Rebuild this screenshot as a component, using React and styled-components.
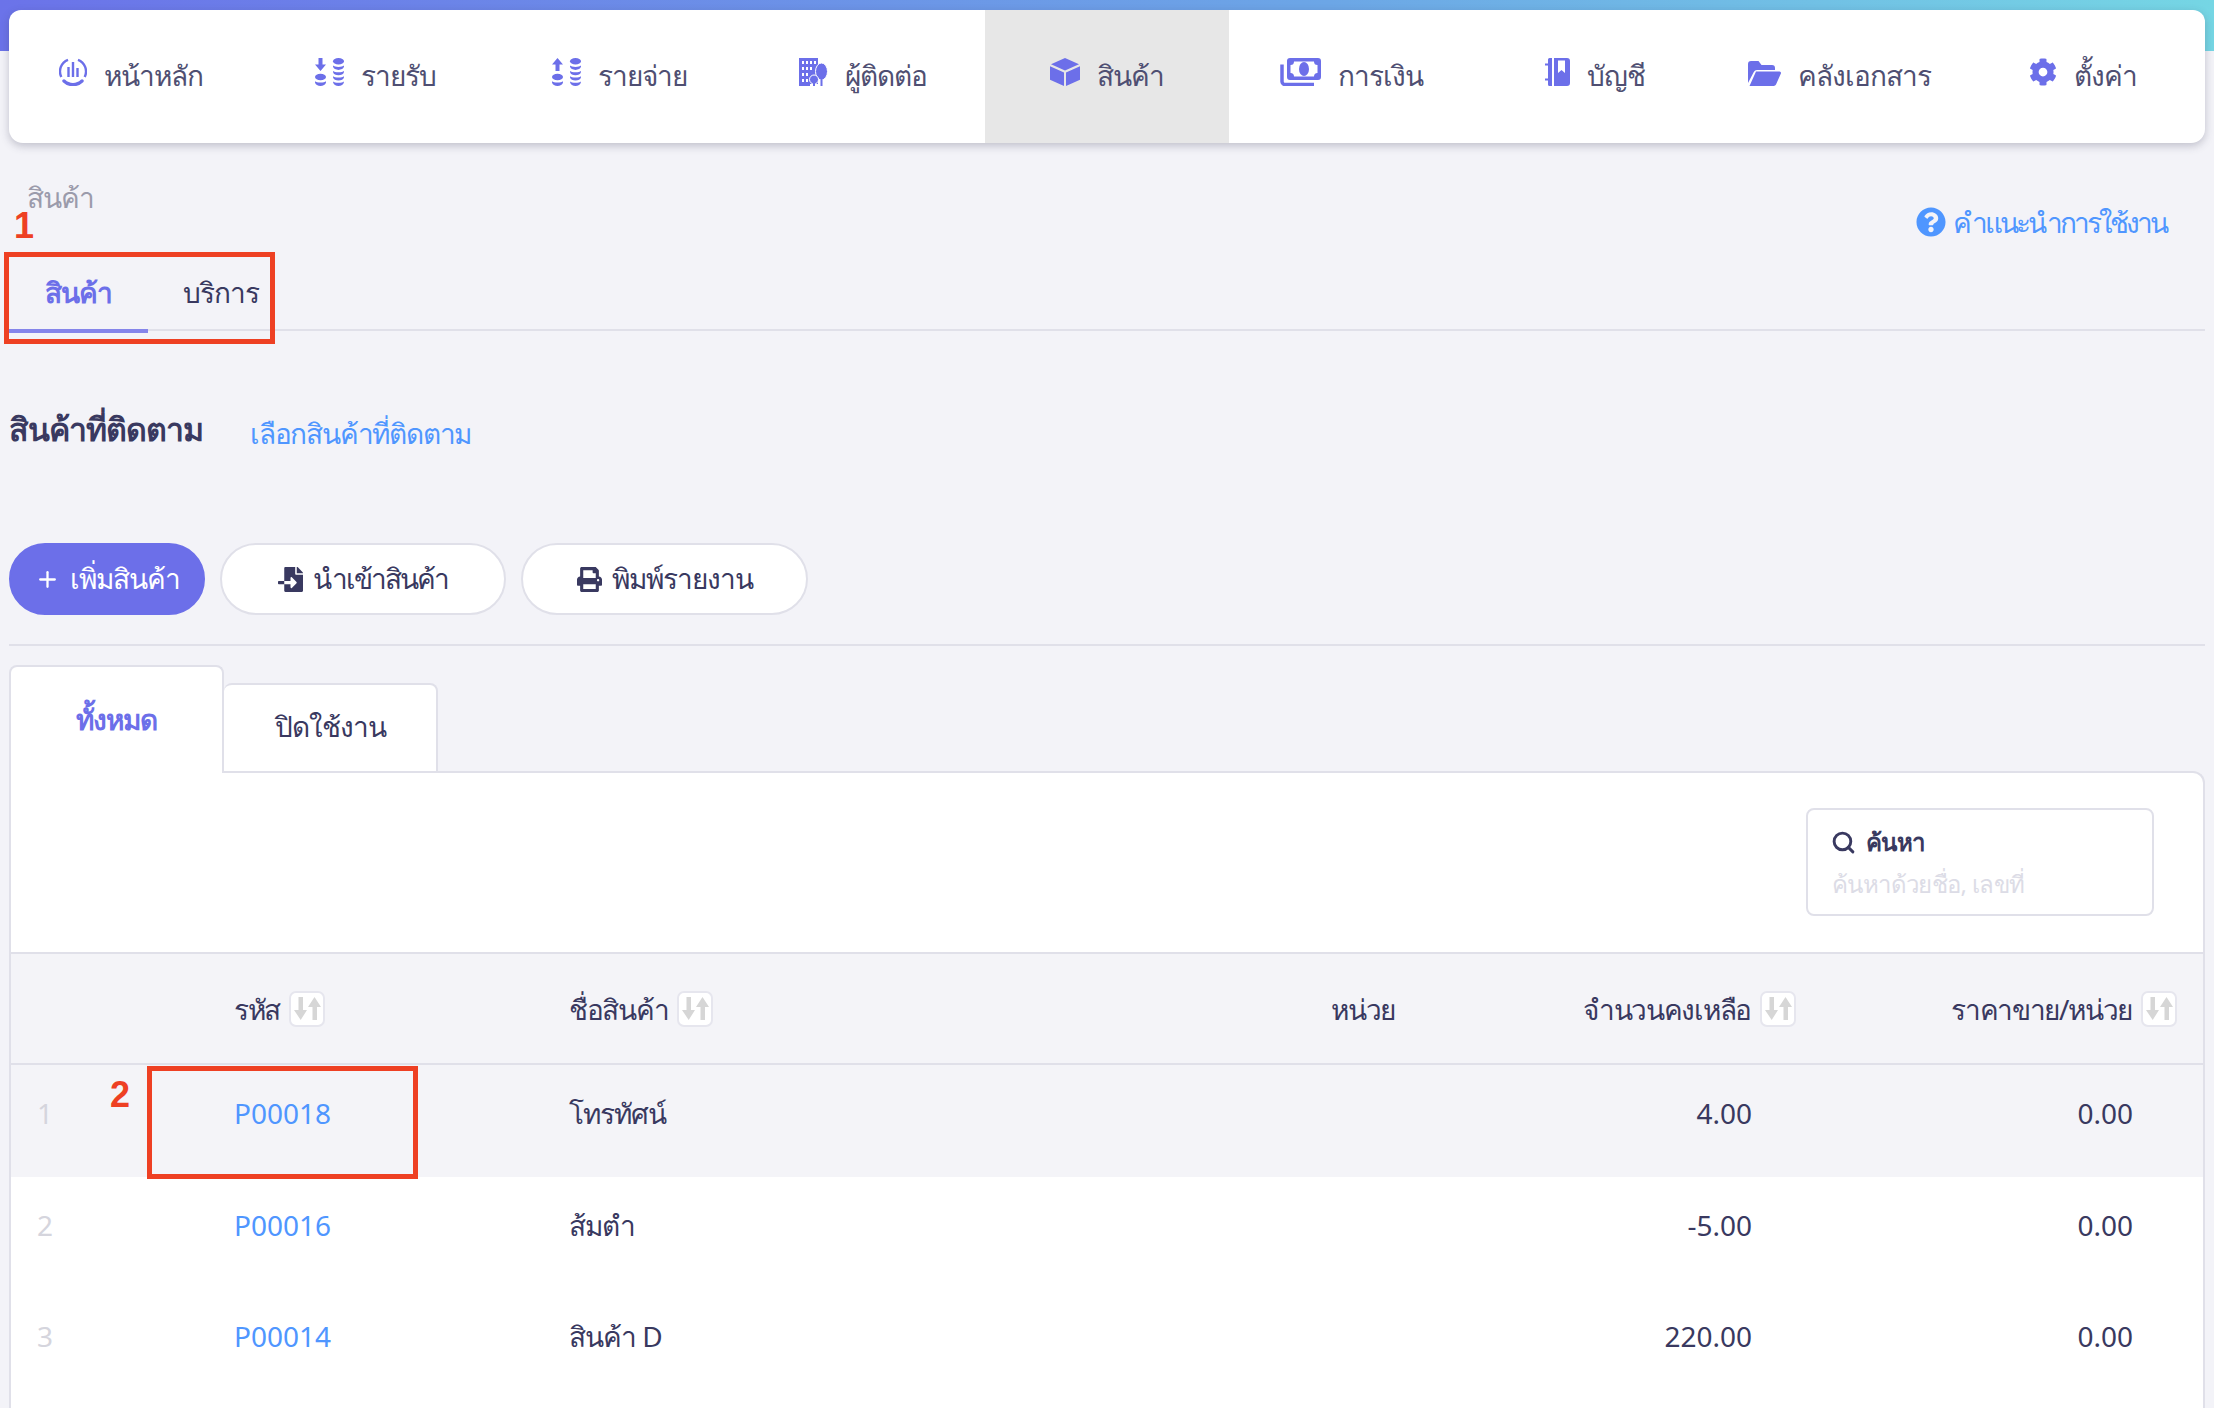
import React from "react";
import styled, { createGlobalStyle } from "styled-components";
import { FaCog, FaPrint, FaFileImport, FaQuestionCircle } from "react-icons/fa";
import { Search, Plus } from "lucide-react";

const ACCENT = "#6c6fe9";
const BLUE = "#4f96ff";
const INK = "#393960";
const LINE = "#e0e0e9";
const RED = "#ee4023";

const GlobalStyle = createGlobalStyle`
  html, body {
    margin: 0;
    padding: 0;
    background: #f3f3f8;
    font-family: "Noto Sans", "Open Sans", sans-serif;
    color: ${INK};
  }
  * { box-sizing: border-box; }
`;

const Page = styled.div`
  position: relative;
  width: 2214px;
  height: 1408px;
  overflow: hidden;
  background: #f3f3f8;
  letter-spacing: -1px;
`;

const Band = styled.div`
  height: 51px;
  background: linear-gradient(90deg, #6b73e9 0%, #6ca6e6 60%, #75d6e4 100%);
`;

const Nav = styled.nav`
  display: grid;
  grid-template-columns: repeat(9, 1fr);
  height: 133px;
  margin: -41px 9px 0;
  background: #fff;
  border-radius: 12px 12px 14px 14px;
  box-shadow: 0 3px 8px rgba(60, 60, 90, 0.28);
  overflow: hidden;
`;

const NavItem = styled.a`
  display: flex;
  align-items: flex-start;
  justify-content: center;
  gap: 17px;
  padding-top: 48px;
  font-size: 28px;
  line-height: 34px;
  color: #4f4f72;
  background: ${({ $active }) => ($active ? "#e7e7e7" : "transparent")};
  svg {
    flex: none;
    color: ${ACCENT};
    width: auto;
    height: 28px;
  }
`;

const Content = styled.div`
  padding: 0 9px;
`;

const Crumbs = styled.div`
  display: flex;
  justify-content: space-between;
  align-items: flex-start;
  height: 116px;
  padding: 40px 0 0 18px;
  font-size: 28px;
  line-height: 28px;
  color: #9b9bab;
`;

const Help = styled.a`
  display: flex;
  align-items: center;
  gap: 7px;
  margin: 24px 39px 0 0;
  color: ${BLUE};
  letter-spacing: -3px;
  svg { width: 30px; height: 30px; }
`;

const TopTabsRow = styled.div`
  display: flex;
  align-items: flex-start;
  height: 72px;
  padding-top: 15px;
  border-bottom: 2px solid ${LINE};
`;

const TopTab = styled.a`
  width: ${({ $w }) => $w}px;
  height: 59px;
  font-size: 28px;
  line-height: 36px;
  text-align: center;
  color: ${({ $active }) => ($active ? ACCENT : INK)};
  font-weight: ${({ $active }) => ($active ? 600 : 400)};
  border-bottom: ${({ $active }) => ($active ? "4px solid #8585ea" : "none")};
`;

const Follow = styled.div`
  display: flex;
  align-items: baseline;
  gap: 47px;
  height: 212px;
  padding-top: 78px;
`;

const FollowTitle = styled.h2`
  margin: 0;
  font-size: 32px;
  line-height: 40px;
  font-weight: 700;
  color: ${INK};
`;

const FollowLink = styled.a`
  position: relative;
  top: 3px;
  font-size: 28px;
  letter-spacing: -1.2px;
  color: ${BLUE};
`;

const Actions = styled.div`
  display: flex;
  gap: 15px;
  height: 103px;
  border-bottom: 2px solid ${LINE};
`;

const PillButton = styled.button`
  display: flex;
  align-items: center;
  justify-content: center;
  gap: 10px;
  width: ${({ $w }) => $w}px;
  height: 72px;
  padding: 0;
  font: inherit;
  font-size: 28px;
  letter-spacing: ${({ $tight }) => ($tight ? "-2px" : "-1px")};
  border-radius: 36px;
  border: 2px solid ${({ $primary }) => ($primary ? ACCENT : LINE)};
  background: ${({ $primary }) => ($primary ? ACCENT : "#fff")};
  color: ${({ $primary }) => ($primary ? "#fff" : INK)};
  svg { width: 25px; height: 25px; }
`;

const ListTabs = styled.div`
  display: flex;
  align-items: flex-end;
  height: 127px;
  margin-bottom: -2px;
  position: relative;
  z-index: 1;
`;

const ListTab = styled.a`
  display: block;
  width: ${({ $active }) => ($active ? 215 : 214)}px;
  height: ${({ $active }) => ($active ? 108 : 90)}px;
  padding-top: ${({ $active }) => ($active ? 34 : 23)}px;
  font-size: 28px;
  line-height: 36px;
  text-align: center;
  background: #fff;
  color: ${({ $active }) => ($active ? ACCENT : INK)};
  font-weight: ${({ $active }) => ($active ? 600 : 400)};
  border: 2px solid ${LINE};
  border-bottom: ${({ $active }) => ($active ? "none" : `2px solid ${LINE}`)};
  border-left-width: ${({ $active }) => ($active ? 2 : 0)}px;
  border-radius: 8px 8px 0 0;
`;

const Panel = styled.section`
  background: #fff;
  border: 2px solid ${LINE};
  border-bottom: none;
  border-radius: 0 12px 0 0;
  height: 640px;
`;

const SearchRow = styled.div`
  display: flex;
  justify-content: flex-end;
  height: 179px;
  padding: 35px 49px 0 0;
`;

const SearchBox = styled.div`
  width: 348px;
  height: 108px;
  padding: 15px 24px;
  border: 2px solid ${LINE};
  border-radius: 8px;
  letter-spacing: -0.6px;
`;

const SearchLabel = styled.div`
  display: flex;
  align-items: center;
  gap: 10px;
  margin-left: -1px;
  font-size: 24px;
  line-height: 34px;
  font-weight: 600;
  svg { width: 25px; height: 25px; flex: none; }
`;

const Placeholder = styled.div`
  margin-top: 9px;
  font-size: 24px;
  line-height: 32px;
  color: #dcdce6;
`;

const Row = styled.div`
  display: grid;
  grid-template-columns: 223px 335px 600px 226px 401px 381px;
  height: ${({ $head }) => ($head ? 113 : 111.5)}px;
  padding-top: ${({ $head }) => ($head ? 0 : 30)}px;
  align-items: ${({ $head }) => ($head ? "center" : "start")};
  font-size: 28px;
  line-height: 36px;
  background: ${({ $shade }) => ($shade ? "#f4f4f8" : "#fff")};
  border-top: ${({ $head }) => ($head ? `2px solid ${LINE}` : "none")};
  border-bottom: ${({ $head }) => ($head ? `2px solid ${LINE}` : "none")};
`;

const HeadCell = styled.div`
  display: flex;
  align-items: center;
  gap: 9px;
  letter-spacing: -1.3px;
  justify-content: ${({ $right }) => ($right ? "flex-end" : "flex-start")};
`;

const SortBox = styled.span`
  display: flex;
  align-items: center;
  justify-content: center;
  flex: none;
  width: 36px;
  height: 36px;
  background: #fff;
  border: 2px solid #e6e6ee;
  border-radius: 7px;
`;

const IndexCell = styled.div`
  padding-left: 26px;
  color: #d5d5dd;
  letter-spacing: 0;
`;

const CodeLink = styled.a`
  color: ${BLUE};
  letter-spacing: 0;
`;

const NumCell = styled.div`
  text-align: right;
  padding-right: 44px;
  letter-spacing: 0;
`;

const Note = styled.span`
  position: absolute;
  left: ${({ $x }) => $x}px;
  top: ${({ $y }) => $y}px;
  font-family: "Liberation Sans", sans-serif;
  font-weight: 700;
  font-size: 36px;
  line-height: 28px;
  letter-spacing: 0;
  color: ${RED};
`;

const NoteBox = styled.div`
  position: absolute;
  left: ${({ $x }) => $x}px;
  top: ${({ $y }) => $y}px;
  width: ${({ $w }) => $w}px;
  height: ${({ $h }) => $h}px;
  border: 5px solid ${RED};
`;

const HomeIcon = () => (
  <svg viewBox="0 0 28 28" fill="none" stroke="currentColor">
    <path d="M9 1.800A12.500 12.500 0 0 0 2.300 19" strokeWidth="2.400" />
    <path d="M19 1.800A12.500 12.500 0 0 1 25.700 19" strokeWidth="2.400" />
    <path d="M5 23a13 13 0 0 0 18 0" strokeWidth="3.400" strokeLinecap="round" />
    <path d="M9.500 9v10M14 4v15M18.500 10v9" strokeWidth="2.400" />
  </svg>
);

const CoinsIcon = ({ up }) => (
  <svg viewBox="0 0 29 28" fill="currentColor">
    {up ? (
      <path d="M5.500 0l5.500 6.500H7.500V13h-4V6.500H0z" />
    ) : (
      <path d="M3.500 0h4v6.500H11L5.500 13 0 6.500h3.500z" />
    )}
    <ellipse cx="5.500" cy="19" rx="5.500" ry="3.200" />
    <path d="M0 23.200c1.500 1.800 9.500 1.800 11 0v1.300c-.8 4.600-10.200 4.600-11 0z" />
    <ellipse cx="23.500" cy="3.200" rx="5.500" ry="3.200" />
    <path d="M18 7.600c1.500 1.800 9.500 1.800 11 0v1c-.8 4.400-10.200 4.400-11 0zM18 13c1.500 1.800 9.500 1.800 11 0v1c-.8 4.400-10.200 4.400-11 0zM18 18.200c1.500 1.800 9.500 1.800 11 0v1c-.8 4.400-10.200 4.400-11 0zM18 23.400c1.500 1.800 9.500 1.800 11 0v.6c-.8 5.300-10.200 5.300-11 0z" />
  </svg>
);

const ContactIcon = () => (
  <svg viewBox="0 0 29 28" fill="currentColor">
    <path
      fillRule="evenodd"
      d="M0 0h19v28H0zM3 3v3h2V3zM7 3v3h2V3zM11 3v3h2V3zM15 3v3h2V3zM3 9v3h2V9zM7 9v3h2V9zM11 9v3h2V9zM3 15v3h2v-3zM7 15v3h2v-3zM3 21v3h2v-3zM7 21v3h2v-3z"
    />
    <path d="M11 26h13v2H11z" fill="#fff" />
    <ellipse cx="22.500" cy="13.500" rx="6" ry="8.500" stroke="#fff" strokeWidth="1" />
    <rect x="21.500" y="20" width="2" height="8" />
    <circle cx="15" cy="21.500" r="4.500" stroke="#fff" strokeWidth="1" />
    <rect x="14" y="25" width="2" height="3" />
  </svg>
);

const CubeIcon = () => (
  <svg viewBox="0 0 30 28" fill="currentColor">
    <path d="M15 0l14 6.200L15 12.400 1 6.200z" />
    <path d="M0 8.300l14 6.200V28L0 21.800zM30 8.300l-14 6.200V28l14-6.200z" />
  </svg>
);

const MoneyIcon = () => (
  <svg viewBox="0 0 41 28" fill="currentColor">
    <path
      fillRule="evenodd"
      d="M10 0h28a3 3 0 0 1 3 3v16a3 3 0 0 1-3 3H10a3 3 0 0 1-3-3V3a3 3 0 0 1 3-3zM14 3.500a3.500 3.500 0 0 1-3.500 3.500v8a3.500 3.500 0 0 1 3.500 3.500h20a3.500 3.500 0 0 1 3.500-3.500V7A3.500 3.500 0 0 1 34 3.500z"
    />
    <ellipse cx="24" cy="11" rx="5" ry="7" />
    <path d="M2 6.500v17a3 3 0 0 0 3 3h29" fill="none" stroke="currentColor" strokeWidth="3.500" />
  </svg>
);

const BookIcon = () => (
  <svg viewBox="0 0 25 28" fill="currentColor">
    <path
      fillRule="evenodd"
      d="M9 0h13a3 3 0 0 1 3 3v22a3 3 0 0 1-3 3H9zM13 2.500V15l3.500-3 3.500 3V2.500z"
    />
    <path d="M3 1.500A1.500 1.500 0 0 1 4.500 0H7v28H4.500A1.500 1.500 0 0 1 3 26.500z" />
    <path d="M0 5.500h4v2H0zM0 20.500h4v2H0z" />
  </svg>
);

const FolderIcon = () => (
  <svg viewBox="0 0 33 28" fill="currentColor">
    <path d="M0 6a3 3 0 0 1 3-3h7.500l3 4H24a3 3 0 0 1 3 3v2H9a3.500 3.500 0 0 0-3.200 2.100L0 25z" />
    <path d="M8 13.500h23.500a1.500 1.500 0 0 1 1.400 2.100L28 26.500a2.500 2.500 0 0 1-2.300 1.500H1.500z" />
  </svg>
);

const SortIcon = () => (
  <svg width="27" height="23" viewBox="0 0 27 23" fill="#d6d6d6">
    <path d="M4.500 0h4.500v13h4L6.700 23 0 13h4.500z" />
    <path d="M20.500 0L27 10h-4v13h-4.500V10H14z" />
  </svg>
);

const navItems = [
  { label: "หน้าหลัก", icon: <HomeIcon /> },
  { label: "รายรับ", icon: <CoinsIcon /> },
  { label: "รายจ่าย", icon: <CoinsIcon up /> },
  { label: "ผู้ติดต่อ", icon: <ContactIcon /> },
  { label: "สินค้า", icon: <CubeIcon />, active: true },
  { label: "การเงิน", icon: <MoneyIcon /> },
  { label: "บัญชี", icon: <BookIcon /> },
  { label: "คลังเอกสาร", icon: <FolderIcon /> },
  { label: "ตั้งค่า", icon: <FaCog /> },
];

const products = [
  { code: "P00018", name: "โทรทัศน์", qty: "4.00", price: "0.00" },
  { code: "P00016", name: "ส้มตำ", qty: "-5.00", price: "0.00" },
  { code: "P00014", name: "สินค้า D", qty: "220.00", price: "0.00" },
];

export default function App() {
  return (
    <Page>
      <GlobalStyle />
      <Band />
      <Nav>
        {navItems.map((item) => (
          <NavItem key={item.label} $active={item.active}>
            {item.icon}
            {item.label}
          </NavItem>
        ))}
      </Nav>

      <Content>
        <Crumbs>
          สินค้า
          <Help>
            <FaQuestionCircle />
            คำแนะนำการใช้งาน
          </Help>
        </Crumbs>
        <TopTabsRow>
          <TopTab $active $w={139}>สินค้า</TopTab>
          <TopTab $w={146}>บริการ</TopTab>
        </TopTabsRow>

        <Follow>
          <FollowTitle>สินค้าที่ติดตาม</FollowTitle>
          <FollowLink>เลือกสินค้าที่ติดตาม</FollowLink>
        </Follow>

        <Actions>
          <PillButton $primary $w={196}>
            <Plus strokeWidth={2.2} />
            เพิ่มสินค้า
          </PillButton>
          <PillButton $tight $w={286}>
            <FaFileImport />
            นำเข้าสินค้า
          </PillButton>
          <PillButton $w={287}>
            <FaPrint />
            พิมพ์รายงาน
          </PillButton>
        </Actions>

        <ListTabs>
          <ListTab $active>ทั้งหมด</ListTab>
          <ListTab>ปิดใช้งาน</ListTab>
        </ListTabs>

        <Panel>
          <SearchRow>
            <SearchBox>
              <SearchLabel>
                <Search strokeWidth={2.8} />
                ค้นหา
              </SearchLabel>
              <Placeholder>ค้นหาด้วยชื่อ, เลขที่</Placeholder>
            </SearchBox>
          </SearchRow>

          <Row $head $shade>
            <div />
            <HeadCell>รหัส <SortBox><SortIcon /></SortBox></HeadCell>
            <HeadCell>ชื่อสินค้า <SortBox><SortIcon /></SortBox></HeadCell>
            <HeadCell $right>หน่วย</HeadCell>
            <HeadCell $right>จำนวนคงเหลือ <SortBox><SortIcon /></SortBox></HeadCell>
            <HeadCell $right>ราคาขาย/หน่วย <SortBox><SortIcon /></SortBox></HeadCell>
          </Row>
          {products.map((p, i) => (
            <Row key={p.code} $shade={i === 0}>
              <IndexCell>{i + 1}</IndexCell>
              <div><CodeLink>{p.code}</CodeLink></div>
              <div>{p.name}</div>
              <div />
              <NumCell>{p.qty}</NumCell>
              <NumCell>{p.price}</NumCell>
            </Row>
          ))}
        </Panel>
      </Content>

      <Note $x={14} $y={212}>1</Note>
      <NoteBox $x={4} $y={252} $w={271} $h={92} />
      <Note $x={110} $y={1081}>2</Note>
      <NoteBox $x={147} $y={1066} $w={271} $h={113} />
    </Page>
  );
}
